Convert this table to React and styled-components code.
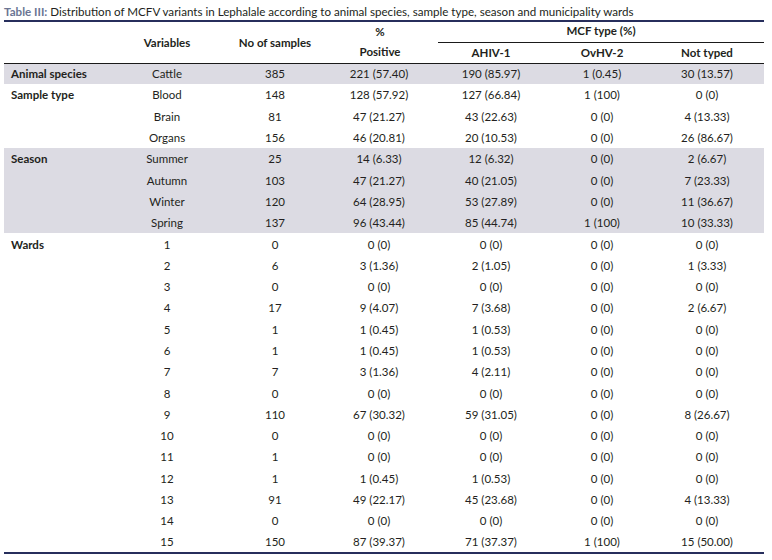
import React from 'react'
import styled, { createGlobalStyle } from 'styled-components'

const GlobalStyle = createGlobalStyle`
  html, body {
    margin: 0;
    padding: 0;
    background: #fff;
  }
  body {
    font-family: Lato, "Open Sans", sans-serif;
    color: #231f20;
  }
`

const StyledWrapper = styled.section`
  width: 760px;
  padding: 5px 0 0 4px;
  .caption {
    font-size: 11.6px;
    line-height: 14px;
    white-space: nowrap;
    padding-bottom: 1px;
    border-bottom: 2px solid #272e5c;
    .label {
      color: #6b7593;
      font-weight: 700;
    }
  }
`

const Table = styled.table`
  width: 760px;
  border-collapse: collapse;
  table-layout: fixed;
  font-size: 11.5px;
  border-bottom: 2px solid #272e5c;
  thead {
    border-bottom: 1px solid #1a1a1a;
  }
  th {
    font-weight: 700;
    text-align: center;
    padding: 0;
    vertical-align: middle;
    white-space: nowrap;
  }
`

const Col = styled.col`
  width: ${(p) => p.$w}px;
`

const HeadRow = styled.tr`
  height: ${(p) => p.$h}px;
`

const McfLabel = styled.div`
  margin-left: 10px;
  height: 20px;
  line-height: 18px;
  border-bottom: 1px solid #1a1a1a;
`

const PctHead = styled.div`
  line-height: 20px;
  padding-left: 2px;
`

const Row = styled.tr`
  height: 21.3px;
  background: ${(p) => (p.$shaded ? '#dcdbe3' : 'transparent')};
  td {
    text-align: center;
    padding: 0;
    white-space: nowrap;
  }
  td.group {
    text-align: left;
    padding-left: 7px;
    font-weight: 700;
  }
`

const widths = [110, 106, 110, 98, 126, 96, 114]

const rows = [
  ['Animal species', 'Cattle', '385', '221 (57.40)', '190 (85.97)', '1 (0.45)', '30 (13.57)', true],
  ['Sample type', 'Blood', '148', '128 (57.92)', '127 (66.84)', '1 (100)', '0 (0)'],
  ['', 'Brain', '81', '47 (21.27)', '43 (22.63)', '0 (0)', '4 (13.33)'],
  ['', 'Organs', '156', '46 (20.81)', '20 (10.53)', '0 (0)', '26 (86.67)'],
  ['Season', 'Summer', '25', '14 (6.33)', '12 (6.32)', '0 (0)', '2 (6.67)', true],
  ['', 'Autumn', '103', '47 (21.27)', '40 (21.05)', '0 (0)', '7 (23.33)', true],
  ['', 'Winter', '120', '64 (28.95)', '53 (27.89)', '0 (0)', '11 (36.67)', true],
  ['', 'Spring', '137', '96 (43.44)', '85 (44.74)', '1 (100)', '10 (33.33)', true],
  ['Wards', '1', '0', '0 (0)', '0 (0)', '0 (0)', '0 (0)'],
  ['', '2', '6', '3 (1.36)', '2 (1.05)', '0 (0)', '1 (3.33)'],
  ['', '3', '0', '0 (0)', '0 (0)', '0 (0)', '0 (0)'],
  ['', '4', '17', '9 (4.07)', '7 (3.68)', '0 (0)', '2 (6.67)'],
  ['', '5', '1', '1 (0.45)', '1 (0.53)', '0 (0)', '0 (0)'],
  ['', '6', '1', '1 (0.45)', '1 (0.53)', '0 (0)', '0 (0)'],
  ['', '7', '7', '3 (1.36)', '4 (2.11)', '0 (0)', '0 (0)'],
  ['', '8', '0', '0 (0)', '0 (0)', '0 (0)', '0 (0)'],
  ['', '9', '110', '67 (30.32)', '59 (31.05)', '0 (0)', '8 (26.67)'],
  ['', '10', '0', '0 (0)', '0 (0)', '0 (0)', '0 (0)'],
  ['', '11', '1', '0 (0)', '0 (0)', '0 (0)', '0 (0)'],
  ['', '12', '1', '1 (0.45)', '1 (0.53)', '0 (0)', '0 (0)'],
  ['', '13', '91', '49 (22.17)', '45 (23.68)', '0 (0)', '4 (13.33)'],
  ['', '14', '0', '0 (0)', '0 (0)', '0 (0)', '0 (0)'],
  ['', '15', '150', '87 (39.37)', '71 (37.37)', '1 (100)', '15 (50.00)'],
]

export default function App() {
  return (
    <StyledWrapper>
      <GlobalStyle />
      <div className="caption">
        <span className="label">Table III:</span> Distribution of MCFV variants in Lephalale according to
        animal species, sample type, season and municipality wards
      </div>
      <Table>
        <colgroup>
          {widths.map((w, i) => (
            <Col key={i} $w={w} />
          ))}
        </colgroup>
        <thead>
          <HeadRow $h={21}>
            <th rowSpan={2}></th>
            <th rowSpan={2}>Variables</th>
            <th rowSpan={2}>No of samples</th>
            <th rowSpan={2}>
              <PctHead>%</PctHead>
              <PctHead>Positive</PctHead>
            </th>
            <th colSpan={3}>
              <McfLabel>MCF type (%)</McfLabel>
            </th>
          </HeadRow>
          <HeadRow $h={20}>
            <th>AHIV-1</th>
            <th>OvHV-2</th>
            <th>Not typed</th>
          </HeadRow>
        </thead>
        <tbody>
          {rows.map((r, i) => (
            <Row key={i} $shaded={r[7]}>
              <td className="group">{r[0]}</td>
              {r.slice(1, 7).map((v, j) => (
                <td key={j}>{v}</td>
              ))}
            </Row>
          ))}
        </tbody>
      </Table>
    </StyledWrapper>
  )
}
